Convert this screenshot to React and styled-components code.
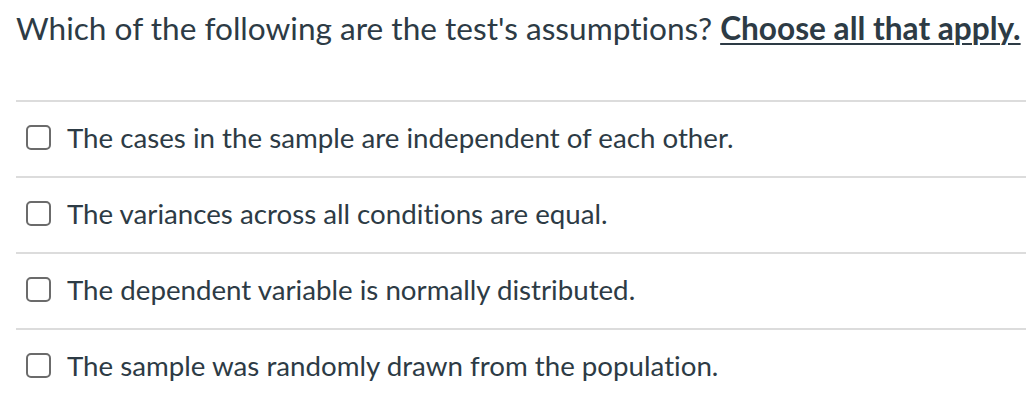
import styled, { createGlobalStyle } from "styled-components";

const GlobalStyle = createGlobalStyle`
  html, body {
    margin: 0;
    padding: 0;
    background: #fff;
  }
  body {
    font-family: Lato, "Open Sans", "Liberation Sans", sans-serif;
    color: #2d3b45;
    font-variant-ligatures: none;
  }
`;

const Page = styled.div`
  width: 1026px;
  height: 404px;
  overflow: hidden;
  padding-left: 16px;
  box-sizing: border-box;
`;

const Question = styled.p`
  margin: 0;
  padding-top: 9px;
  height: 100px;
  box-sizing: border-box;
  font-size: 31.6px;
  line-height: 38px;
  white-space: nowrap;
`;

const Emphasis = styled.strong`
  font-weight: 700;
  text-decoration: underline;
  text-underline-offset: 3px;
  text-decoration-thickness: 2px;
`;

const AnswerList = styled.ul`
  list-style: none;
  margin: 0;
  padding: 0;
`;

const AnswerRow = styled.li`
  display: flex;
  align-items: center;
  gap: 16px;
  height: 76px;
  box-sizing: border-box;
  border-top: 2px solid #dcdcdc;
  padding-left: 10px;
  padding-bottom: 3px;
`;

const Box = styled.span`
  width: 25px;
  height: 25px;
  box-sizing: border-box;
  border: 2px solid #6b6b6b;
  border-radius: 5px;
  flex-shrink: 0;
`;

const AnswerText = styled.span`
  font-size: 27.7px;
  line-height: 32px;
  white-space: nowrap;
`;

const answers = [
  "The cases in the sample are independent of each other.",
  "The variances across all conditions are equal.",
  "The dependent variable is normally distributed.",
  "The sample was randomly drawn from the population.",
];

export default function App() {
  return (
    <>
      <GlobalStyle />
      <Page>
        <Question>
          Which of the following are the test's assumptions?{" "}
          <Emphasis>Choose all that apply.</Emphasis>
        </Question>
        <AnswerList>
          {answers.map((a) => (
            <AnswerRow key={a}>
              <Box />
              <AnswerText>{a}</AnswerText>
            </AnswerRow>
          ))}
        </AnswerList>
      </Page>
    </>
  );
}
